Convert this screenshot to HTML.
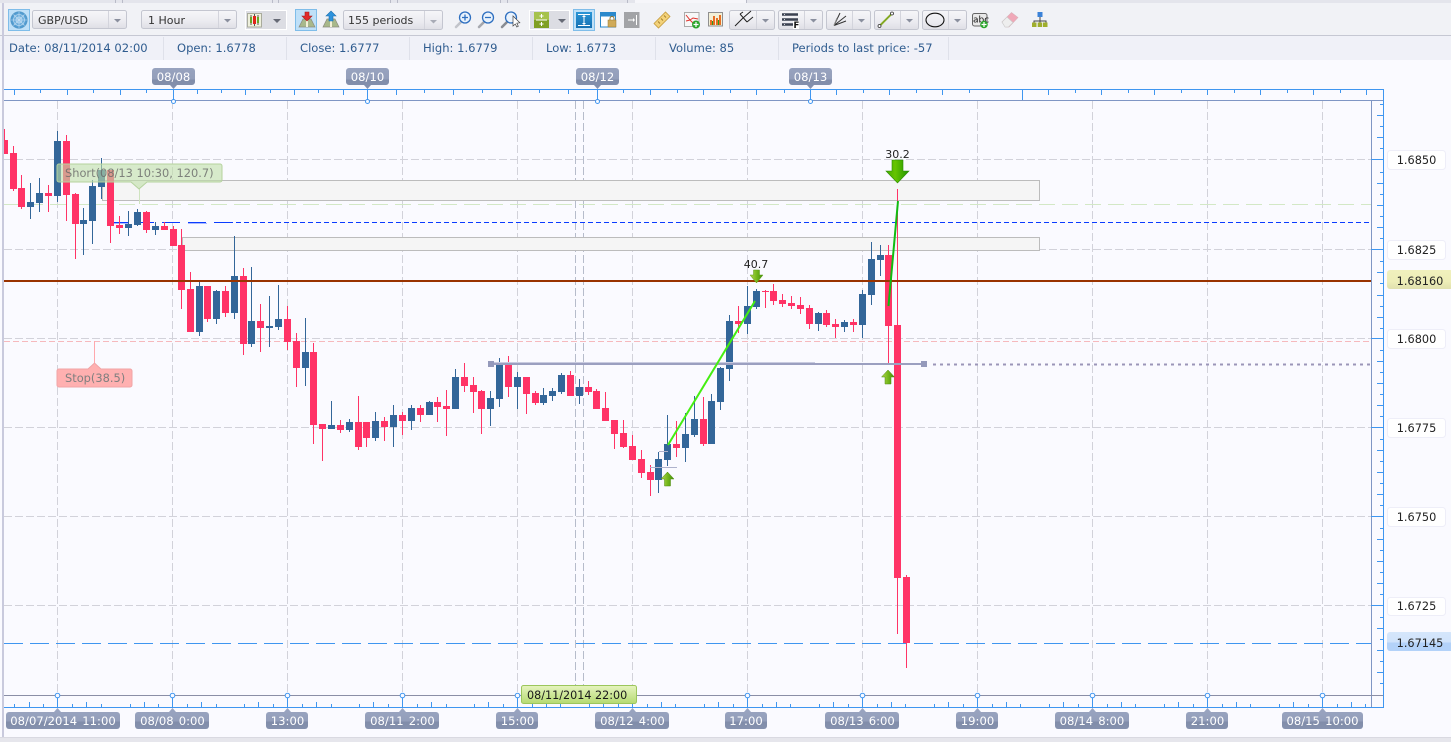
<!DOCTYPE html>
<html><head><meta charset="utf-8"><title>GBP/USD chart</title>
<style>
html,body{margin:0;padding:0;background:#fafaff;width:1451px;height:742px;overflow:hidden}
svg{position:absolute;left:0;top:0;display:block}
text{font-family:"DejaVu Sans","Liberation Sans",sans-serif;font-size:11px}
.i{fill:#2f5c8f;font-size:11.55px}
.l{fill:#fff;font-size:11.6px;text-anchor:middle;word-spacing:1.5px}
.p{fill:#222;font-size:11.3px;text-anchor:middle}
.d{fill:#333;font-size:11.3px}
.c{shape-rendering:crispEdges}
</style></head><body>
<svg width="1451" height="742" viewBox="0 0 1451 742" xmlns="http://www.w3.org/2000/svg">
<defs>
<linearGradient id="lb" x1="0" y1="0" x2="0" y2="1"><stop offset="0" stop-color="#98a3bf"/><stop offset=".55" stop-color="#939eba"/><stop offset=".56" stop-color="#808ca9"/><stop offset="1" stop-color="#8591ae"/></linearGradient>
<linearGradient id="dd" x1="0" y1="0" x2="0" y2="1"><stop offset="0" stop-color="#f6f6f9"/><stop offset=".6" stop-color="#ebebf0"/><stop offset="1" stop-color="#dedee5"/></linearGradient>
<linearGradient id="gl" x1="0" y1="0" x2="0" y2="1"><stop offset="0" stop-color="#e6f4bf"/><stop offset="1" stop-color="#b5da72"/></linearGradient>
<linearGradient id="ye" x1="0" y1="0" x2="0" y2="1"><stop offset="0" stop-color="#f0f0bd"/><stop offset=".6" stop-color="#eeeeb8"/><stop offset="1" stop-color="#e0e0ae"/></linearGradient>
<linearGradient id="bl" x1="0" y1="0" x2="0" y2="1"><stop offset="0" stop-color="#d5e6fb"/><stop offset=".55" stop-color="#d0e3fb"/><stop offset=".56" stop-color="#b3d2f9"/><stop offset="1" stop-color="#b3d2f9"/></linearGradient>
<linearGradient id="ar" x1="0" y1="0" x2="1" y2="0"><stop offset="0" stop-color="#b4d850"/><stop offset=".5" stop-color="#76b81c"/><stop offset="1" stop-color="#3f8f08"/></linearGradient>
<linearGradient id="ad" x1="0" y1="0" x2="1" y2="0"><stop offset="0" stop-color="#44aa00"/><stop offset=".4" stop-color="#66c400"/><stop offset="1" stop-color="#1e9400"/></linearGradient>
<radialGradient id="gb"><stop offset="0" stop-color="#9ccbee"/><stop offset="1" stop-color="#4594cc"/></radialGradient>
<linearGradient id="bb" x1="0" y1="0" x2="0" y2="1"><stop offset="0" stop-color="#2b95d6"/><stop offset="1" stop-color="#1670b2"/></linearGradient>
<linearGradient id="hd" x1="0" y1="0" x2="1" y2="0"><stop offset="0" stop-color="#c4c6cc"/><stop offset="1" stop-color="#85888f"/></linearGradient>
</defs>

<!-- backgrounds -->
<rect width="1451" height="742" fill="#fafaff"/>
<rect width="1451" height="36" fill="#f1f2f6"/>
<rect y="0" width="1451" height="3" fill="#e4e5ec"/>
<path class="c" d="M115.5 0V3M122.5 0V3M272.5 0V3M278.5 0V3M390.5 0V3M397.5 0V3M500.5 0V3M507.5 0V3M627.5 0V3M635.5 0V3M746.5 0V3" stroke="#b9bbc8"/>
<rect x="635" y="0" width="111" height="3" fill="#f6f6fa"/>
<rect y="35" width="1451" height="1" fill="#c6c8d3"/>
<rect y="36" width="1451" height="24" fill="#f0f1f8"/>
<path class="c" d="M163.5 37V60M286.5 37V60M409.5 37V60M532.5 37V60M655.5 37V60M778.5 37V60M948.5 37V60" stroke="#dfe1ea"/>
<rect x="2" y="3" width="2" height="735" fill="#c9cadd"/>
<rect y="737" width="1451" height="1" fill="#d9d9e1"/>
<rect y="738" width="1451" height="4" fill="#e6e6ec"/>

<!-- toolbar -->
<rect x="8.5" y="9.5" width="21" height="21" fill="#bfe0f8" stroke="#7fbde9"/>
<circle cx="19" cy="20" r="8.3" fill="url(#gb)" stroke="#5d9cc9" stroke-width=".6"/>
<g fill="none" stroke="#c3def3" stroke-width=".6"><circle cx="19" cy="20" r="5.5"/><circle cx="19" cy="20" r="3"/><path d="M11 20H27M19 12V28M13.5 14.500L24.500 25.500M24.500 14.500L13.500 25.500"/></g>

<rect x="32.5" y="10.5" width="94" height="18" rx="2" fill="url(#dd)" stroke="#c4c6d0"/>
<path class="c" d="M108.5 11V28" stroke="#d3d4dc"/>
<path d="M114 19h7l-3.500 3.500z" fill="#8a8f9e"/>
<text x="38" y="24" fill="#333">GBP/USD</text>

<rect x="141.5" y="10.5" width="95" height="18" rx="2" fill="url(#dd)" stroke="#c4c6d0"/>
<path class="c" d="M218.5 11V28" stroke="#d3d4dc"/>
<path d="M224 19h7l-3.500 3.500z" fill="#8a8f9e"/>
<text x="148" y="24" fill="#333">1 Hour</text>

<rect x="245.5" y="10.5" width="41" height="19" fill="#dcdde3" stroke="#fff"/>
<rect x="247.5" y="13.5" width="14" height="13.500" fill="#eef0dc" stroke="#a9ab9c"/>
<path d="M251 15V25M254.500 14V26M258 15V25" stroke="#333" stroke-width=".8"/>
<rect x="250" y="17" width="2" height="6" fill="#6aa52a"/><rect x="253" y="16" width="3" height="8" fill="#e2231a"/><rect x="257" y="17" width="2" height="6" fill="#6aa52a"/>
<path d="M273 19h8l-4 4z" fill="#666a75"/>

<rect x="295.5" y="9.5" width="21" height="21" fill="#bfe0f8" stroke="#7fbde9"/>
<path d="M299 27l4-8h8l4 8z" fill="#a8b88a" stroke="#8b8b80" stroke-width=".7"/><path d="M307 19v8" stroke="#f4f0d8" stroke-width="2"/>
<path d="M305 12h4v4h3l-5 5-5-5h3z" fill="#e12a2a" stroke="#a81b1b" stroke-width=".6"/>
<path d="M323 27l4-8h8l4 8z" fill="#a8b88a" stroke="#8b8b80" stroke-width=".7"/><path d="M331 19v8" stroke="#f4f0d8" stroke-width="2"/>
<path d="M331 11l5 5h-3v5h-4v-5h-3z" fill="#2e93dd" stroke="#1d6fae" stroke-width=".6"/>

<rect x="343.5" y="10.5" width="99" height="19" rx="2" fill="url(#dd)" stroke="#c4c6d0"/>
<path class="c" d="M424.5 11V29" stroke="#d3d4dc"/>
<path d="M430 20h7l-3.500 3.500z" fill="#a8abb6"/>
<text x="348" y="24" fill="#333">155 periods</text>

<!-- magnifiers -->
<path d="M461 22l-5 5M484 22l-5 5M507 22l-5 5" stroke="url(#hd)" stroke-width="2.600" stroke-linecap="round"/>
<g fill="#e9f2fc" stroke="#2e6fc0" stroke-width="1.300">
<circle cx="465" cy="17.500" r="5.500"/><circle cx="488" cy="17.500" r="5.500"/><circle cx="511" cy="17.500" r="5.500"/>
</g>
<path d="M462 17.500h6M465 14.500v6M485 17.500h6" stroke="#2e6fc0" stroke-width="1.300"/>
<path d="M513 16l0 10 2.300-2 1.500 3 1.500-.8-1.500-3 3-.4z" fill="#fff" stroke="#444" stroke-width=".7"/>

<!-- fit / panels -->
<rect x="529.5" y="10.5" width="40" height="19" fill="#dcdde3" stroke="#fff"/>
<rect x="534" y="12" width="15" height="8" fill="#a6c24c"/><rect x="534" y="20" width="15" height="8" fill="#7f9f22"/>
<path class="c" d="M536 20h11" stroke="#fff"/><path d="M541.500 14v4M539.500 16h4M541.500 22v4M539.500 24h4" stroke="#fff"/>
<path d="M558 19h8l-4 4z" fill="#666a75"/>

<rect x="573.5" y="9.5" width="21" height="21" fill="#bfe0f8" stroke="#7fbde9"/>
<rect x="576" y="12" width="16" height="16" fill="url(#bb)"/>
<path d="M578 14.500h12M578 25.500h12M584 16v8" stroke="#fff"/><path d="M582 17l2-2 2 2zM582 23l2 2 2-2z" fill="#fff"/>

<rect x="600.5" y="12.500" width="15" height="14.500" fill="#fff" stroke="#2b89cc"/><rect x="600" y="12" width="16" height="4.500" fill="#2b89cc"/>
<path d="M610 20v-1.500a2 2 0 0 1 4 0V20" fill="none" stroke="#94762f"/><rect x="608" y="20" width="8" height="7" fill="#d0aa58" stroke="#94762f" stroke-width=".5"/>
<rect x="624" y="12" width="15.500" height="16" fill="#a2a3a6"/><path d="M628 20h6M636.500 15v10" stroke="#fff"/><path d="M633 18l2 2-2 2z" fill="#fff"/>

<!-- ruler -->
<path d="M654 23.500l11.500-11.500 4.500 4.500-11.500 11.500z" fill="#f3d27a" stroke="#c59b3c" stroke-width=".8"/><path d="M658 21.500l2 2M661 18.500l2 2M664 15.500l2 2" stroke="#a7812e"/>

<!-- indicator icons -->
<rect x="684.5" y="12.5" width="14.500" height="14" fill="#f8f8f8" stroke="#aaa"/>
<path d="M686 15l4 5 3-2 5 1M686 21l4-1 4 4" stroke="#e0302a" fill="none"/><circle cx="696" cy="24.500" r="4" fill="#2ca52c"/><path d="M693.500 24.500h5M696 22v5" stroke="#fff" stroke-width="1.200"/>
<rect x="708.5" y="12.5" width="14" height="13.500" fill="#f3efd6" stroke="#8f8f8f"/>
<path d="M711 25v-5M714 25v-9M717 25v-7M720 25v-10" stroke="#e76f23" stroke-width="2"/><path d="M712.500 25v-4M718.500 25v-5" stroke="#2c9c1c"/>

<!-- split dropdowns -->
<g fill="url(#dd)" stroke="#c4c6d0">
<rect x="729.5" y="10.5" width="45" height="19" rx="2"/><rect x="778.5" y="10.5" width="44" height="19" rx="2"/><rect x="826.5" y="10.5" width="44" height="19" rx="2"/><rect x="874.5" y="10.5" width="44" height="19" rx="2"/><rect x="922.5" y="10.5" width="44" height="19" rx="2"/>
</g>
<path class="c" d="M756.5 11V29M804.5 11V29M852.5 11V29M900.5 11V29M948.5 11V29" stroke="#d3d4dc"/>
<path d="M762 19h7l-3.500 3.500zM810 19h7l-3.500 3.500zM858 19h7l-3.500 3.500zM906 19h7l-3.500 3.500zM954 19h7l-3.500 3.500z" fill="#8a8f9e"/>
<path d="M735 26L743 18M740 14L747 22M740 14L743 12M743 18L751 11M747 22L753 17" stroke="#222" fill="none"/>
<path d="M782 14.500h16M782 19.500h16M782 24.500h11" stroke="#3a4150" stroke-width="2.400"/><path d="M784 14.500h1M784 19.500h1M784 24.500h1" stroke="#cfd2da" stroke-width="1"/><rect x="793" y="21" width="6" height="8" fill="#fff"/><text x="793.500" y="28" style="font-size:8.500px;font-weight:bold" fill="#111">F</text>
<path d="M834 25.500L840 13M834 25.500L846 16M834 25.500L846 21" stroke="#333" fill="none"/><path d="M834 25.500L837 18" stroke="#888"/>
<path d="M879.500 26L892 13.500" stroke="#8fb52a" stroke-width="2"/><path d="M879.500 26L892 13.500" stroke="#5f7f14" stroke-width=".5"/><circle cx="879.500" cy="26" r="1.500" fill="#fff" stroke="#333" stroke-width=".8"/><circle cx="892" cy="13.500" r="1.500" fill="#fff" stroke="#333" stroke-width=".8"/>
<ellipse cx="935" cy="20" rx="9" ry="6.800" fill="none" stroke="#111" stroke-width="1.100"/>
<rect x="972.5" y="13.5" width="14.500" height="12.500" rx="2" fill="#e9e9e9" stroke="#666"/><text x="973" y="22.500" style="font-size:9px" fill="#111">abc</text><circle cx="984" cy="24.500" r="3.800" fill="#2ca52c"/><path d="M981.500 24.500h5M984 22v5" stroke="#fff" stroke-width="1.200"/>
<!-- eraser -->
<path d="M1002 22l9.500-9.500 6.500 5-9 9.500h-3.500z" fill="#f0a8b8" stroke="#d8b0b8" stroke-width=".6"/><path d="M1002 22l5-5 6 5.500-4.500 4.500h-3.500z" fill="#eeeeee" stroke="#c8c8c8" stroke-width=".6"/>
<!-- tree -->
<rect x="1037.500" y="12" width="5" height="5" fill="#3b82d8"/><path d="M1040 17v4M1034 23v-2h12v2M1040 21v2" stroke="#444" fill="none"/>
<rect x="1032" y="22.500" width="4.500" height="4.500" fill="#9fae2c"/><rect x="1037.700" y="22.500" width="4.500" height="4.500" fill="#9fae2c"/><rect x="1043" y="22.500" width="4.500" height="4.500" fill="#9fae2c"/>

<!-- info row -->
<text class="i" x="9" y="52">Date: 08/11/2014 02:00</text>
<text class="i" x="177" y="52">Open: 1.6778</text>
<text class="i" x="300" y="52">Close: 1.6777</text>
<text class="i" x="423" y="52">High: 1.6779</text>
<text class="i" x="546" y="52">Low: 1.6773</text>
<text class="i" x="669" y="52">Volume: 85</text>
<text class="i" x="792" y="52">Periods to last price: -57</text>

<!-- grid -->
<g class="c" stroke="#d2d2da" stroke-dasharray="8 3" fill="none">
<path d="M4 159.500H1371M4 249.500H1371M4 338.500H1371M4 427.500H1371M4 516.500H1371M4 605.500H1371"/>
<path d="M57.500 101V695M172.500 101V695M287.500 101V695M402.500 101V695M517.500 101V695M632.500 101V695M747.500 101V695M862.500 101V695M977.500 101V695M1092.500 101V695M1207.500 101V695M1322.500 101V695"/>
</g>
<path class="c" d="M575.500 101V695M583.500 101V695" stroke="#b6bccb" stroke-dasharray="8 3"/>

<!-- zones -->
<path class="c" d="M102.500 181V200.500H1039.500V180.500H102.500" fill="#f5f5f5" stroke="#bcbcbc"/>
<rect class="c" x="182.500" y="237.500" width="857" height="13" fill="#f5f5f5" stroke="#bcbcbc"/>

<!-- horizontal levels -->
<path class="c" d="M4 204.500H1371" stroke="#d3e8c6" stroke-dasharray="16 7"/>
<path class="c" d="M4 341.500H1371" stroke="#f6b9bd" stroke-dasharray="6 3"/>
<path class="c" d="M110 223.500H128M188 223.500H207" stroke="#aab8ff"/>
<path class="c" d="M110 222.500H228" stroke="#0a3cff" stroke-dasharray="18 8"/>
<path class="c" d="M228 222.500H1371" stroke="#0a3cff" stroke-dasharray="5 3"/>
<path class="c" d="M4 643.500H1371" stroke="#3f96f0" stroke-dasharray="19 7"/>

<!-- candles -->
<path class="c" fill="none" stroke="#ff3366" d="M4.500 129V154M13.500 146V191M21.500 175V209M48.500 185V212M66.500 135V221M75.500 193V259M110.500 170V243M119.500 216V234M146.500 211V233M164.500 222V230M173.500 226V246M181.500 229V309M190.500 272V332M207.500 286V322M225.500 286V317M243.500 268V355M260.500 304V352M287.500 306V350M296.500 333V387M313.500 343V444M322.500 424V461M340.500 420V433M358.500 396V450M366.500 422V447M384.500 417V441M402.500 412V435M420.500 405V422M437.500 397V422M446.500 390V436M464.500 363V392M473.500 377V413M481.500 390V434M508.500 356V397M526.500 377V414M535.500 391V405M570.500 371V396M588.500 381V395M596.500 389V409M605.500 392V421M614.500 420V449M623.500 420V448M632.500 435V460M641.500 450V478M650.500 465V496M676.500 421V457M703.500 397V446M738.500 306V333M765.500 290V308M773.500 284V305M782.500 294V307M791.500 296V309M800.500 297V314M809.500 305V329M826.500 310V327M835.500 319V338M853.500 319V332M888.500 245V363M897.500 189V634M906.500 575V668"/>
<path class="c" d="M6 140V154" stroke="#ff3366" stroke-width="4"/>
<path class="c" fill="none" stroke="#ff3366" stroke-width="7" d="M13.500 153V189M21.500 188V207M48.500 193V196M66.500 141V195M75.500 194V224M110.500 170V226M119.500 225V228M146.500 212V230M164.500 226V230M173.500 229V246M181.500 245V290M190.500 289V332M207.500 286V319M225.500 291V313M243.500 276V344M260.500 321V328M287.500 319V342M296.500 341V368M313.500 352V425M322.500 424V429M340.500 425V430M358.500 422V447M366.500 422V438M384.500 421V427M402.500 415V421M420.500 408V415M437.500 402V407M446.500 406V409M464.500 377V386M473.500 385V392M481.500 391V409M508.500 363V387M526.500 377V394M535.500 393V403M570.500 375V396M588.500 387V392M596.500 391V409M605.500 408V421M614.500 420V434M623.500 433V447M632.500 446V460M641.500 459V473M650.500 472V480M676.500 444V448M703.500 419V444M738.500 321V324M765.500 291V292M773.500 291V301M782.500 300V304M791.500 303V306M800.500 305V309M809.500 308V324M826.500 313V325M835.500 324V327M853.500 322V325M888.500 255V326M897.500 325V578M906.500 577V643"/>
<path class="c" fill="none" stroke="#336699" d="M30.500 183V219M39.500 178V212M57.500 131V202M83.500 208V255M92.500 180V244M101.500 158V199M128.500 211V236M137.500 209V226M155.500 222V235M199.500 282V336M216.500 290V324M234.500 236V319M251.500 267V347M269.500 296V347M278.500 285V330M305.500 318V386M331.500 401V429M349.500 419V432M375.500 412V441M393.500 405V447M411.500 405V430M429.500 401V415M455.500 369V409M490.500 391V426M499.500 358V407M517.500 372V409M543.500 388V405M552.500 388V401M561.500 373V394M579.500 379V404M658.500 452V493M667.500 415V466M685.500 413V462M694.500 396V437M711.500 394V444M720.500 367V410M729.500 315V381M747.500 286V334M756.500 289V309M818.500 312V331M844.500 320V332M862.500 290V338M871.500 242V305M880.500 245V276"/>
<path class="c" fill="none" stroke="#336699" stroke-width="7" d="M30.500 202V207M39.500 193V203M57.500 141V196M83.500 220V224M92.500 186V221M101.500 170V187M128.500 224V228M137.500 212V225M155.500 226V230M199.500 286V332M216.500 291V319M234.500 276V313M251.500 321V344M269.500 326V328M278.500 319V327M305.500 352V368M331.500 425V429M349.500 422V430M375.500 421V438M393.500 415V427M411.500 408V421M429.500 402V415M455.500 377V409M490.500 398V409M499.500 363V399M517.500 377V387M543.500 395V403M552.500 391V396M561.500 375V392M579.500 387V396M658.500 459V480M667.500 444V460M685.500 434V448M694.500 419V435M711.500 401V444M720.500 368V402M729.500 321V369M747.500 306V324M756.500 291V307M818.500 313V324M844.500 322V327M862.500 294V325M871.500 259V295M880.500 255V260"/>

<!-- brown line -->
<rect x="4" y="280" width="1367" height="2" fill="#993300"/>

<!-- lilac line -->
<path class="c" d="M491 362.500H815" stroke="#c9cbe0"/>
<path class="c" d="M491 364H924" stroke="#9b9fc0" stroke-width="2"/>
<rect x="488" y="361" width="6" height="6" fill="#9499bb"/><rect x="921" y="361" width="6" height="6" fill="#9499bb"/>
<path class="c" d="M933 364.500H1371" stroke="#9b95b8" stroke-width="2" stroke-dasharray="3 4"/>
<path class="c" d="M650 467.500H677M659 451.500H668" stroke="#aeb2cc"/>

<!-- trend lines -->
<path d="M668 445L755 301" stroke="#44ee11" stroke-width="2" fill="none"/>
<path d="M888.500 306L898 201" stroke="#11bb11" stroke-width="2" fill="none"/>

<!-- arrows -->
<path d="M892 160h11v11h6l-11.500 12-11.500-12h6z" fill="url(#ad)" stroke="#2a8a06" stroke-width=".6"/>
<path d="M753.500 270h6v5h3.500l-6.500 8-6.500-8h3.500z" fill="url(#ar)" stroke="#5e9a18" stroke-width=".5"/>
<path d="M667.500 472l6.500 7h-3.500v7h-6v-7h-3.500z" fill="url(#ar)" stroke="#4f8a10" stroke-width=".5"/>
<path d="M888 370l6.500 7h-3.500v7h-6v-7h-3.500z" fill="url(#ar)" stroke="#4f8a10" stroke-width=".5"/>
<text x="897.5" y="158" style="font-size:11px;text-anchor:middle" fill="#222">30.2</text>
<text x="756" y="268" style="font-size:11px;text-anchor:middle" fill="#222">40.7</text>

<!-- short / stop labels -->
<path d="M139.5 188V204" stroke="#cfe3bf"/>
<path d="M57 166a2 2 0 0 1 2-2H220a2 2 0 0 1 2 2V180a2 2 0 0 1-2 2H147l-8 7-8-7H59a2 2 0 0 1-2-2z" fill="#bfe0a8" fill-opacity=".6" stroke="#b5d29e"/>
<text x="65" y="177" style="font-size:11.4px" fill="#666" fill-opacity=".8">Short(08/13 10:30, 120.7)</text>
<path d="M94.5 341V363" stroke="#ffa8ad"/>
<path d="M57 371a2 2 0 0 1 2-2H88l6.500-6 6.500 6H130a2 2 0 0 1 2 2V385a2 2 0 0 1-2 2H59a2 2 0 0 1-2-2z" fill="#ffb0b0" stroke="#f0a4a6"/>
<text x="65" y="382" style="font-size:11.4px" fill="#7f7f7f">Stop(38.5)</text>

<!-- top axis -->
<path class="c" d="M4 89.500H1383" stroke="#3f96f0"/>
<path class="c" d="M4 100.500H1383" stroke="#7f96c4"/>
<path class="c" stroke="#3f96f0" d="M14.500 90V95M67.500 90V95M120.500 90V95M197.500 90V94M245.500 90V95M294.500 90V95M343.500 90V95M396.500 90V95M453.500 90V95M511.500 90V95M568.500 90V94M650.500 90V95M703.500 90V95M756.500 90V95M836.500 90V95M889.500 90V95M942.500 90V95M1048.500 90V95M1101.500 90V95M1154.500 90V95M1207.500 90V95M1260.500 90V95M1313.500 90V95M1366.500 90V95"/>
<path class="c" stroke="#3f96f0" d="M40.500 90V93M93.500 90V93M146.500 90V93M221.500 90V93M270.500 90V93M318.500 90V93M424.500 90V93M482.500 90V93M539.500 90V93M623.500 90V93M677.500 90V93M730.500 90V93M784.500 90V93M863.500 90V93M916.500 90V93M969.500 90V93M1075.500 90V93M1128.500 90V93M1181.500 90V93M1234.500 90V93M1287.500 90V93M1340.500 90V93"/>
<path class="c" stroke="#3f96f0" d="M173.500 90V100M367.500 90V100M597.500 90V100M810.500 90V100M1022.500 90V100"/>
<g fill="#fafaff" stroke="#3f96f0"><circle cx="173.5" cy="101.5" r="2"/><circle cx="367.5" cy="101.5" r="2"/><circle cx="597.5" cy="101.5" r="2"/><circle cx="810.5" cy="101.5" r="2"/></g>

<g fill="url(#lb)">
<path d="M155 68H192a3 3 0 0 1 3 3V82a3 3 0 0 1-3 3H177l-3.500 4-3.500-4H155a3 3 0 0 1-3-3V71a3 3 0 0 1 3-3z"/>
<path d="M349 68H386a3 3 0 0 1 3 3V82a3 3 0 0 1-3 3H371l-3.500 4-3.500-4H349a3 3 0 0 1-3-3V71a3 3 0 0 1 3-3z"/>
<path d="M579 68H616a3 3 0 0 1 3 3V82a3 3 0 0 1-3 3H601l-3.500 4-3.500-4H579a3 3 0 0 1-3-3V71a3 3 0 0 1 3-3z"/>
<path d="M792 68H829a3 3 0 0 1 3 3V82a3 3 0 0 1-3 3H814l-3.500 4-3.500-4H792a3 3 0 0 1-3-3V71a3 3 0 0 1 3-3z"/>
</g>
<text class="l" x="173.5" y="81">08/08</text>
<text class="l" x="367.5" y="81">08/10</text>
<text class="l" x="597.5" y="81">08/12</text>
<text class="l" x="810.5" y="81">08/13</text>

<!-- right axis -->
<path class="c" d="M1371.500 100V707" stroke="#7f96c4"/>
<path class="c" d="M1383.500 89V708" stroke="#3f96f0"/>
<path class="c" stroke="#3f96f0" d="M1371 159.500H1383M1371 249.500H1383M1371 338.500H1383M1371 427.500H1383M1371 516.500H1383M1371 605.500H1383"/>
<path class="c" stroke="#3f96f0" d="M1377 115.500H1383M1377 137.500H1383M1377 183.500H1383M1377 205.500H1383M1377 227.500H1383M1377 272.500H1383M1377 295.500H1383M1377 317.500H1383M1377 361.500H1383M1377 383.500H1383M1377 405.500H1383M1377 450.500H1383M1377 472.500H1383M1377 494.500H1383M1377 539.500H1383M1377 561.500H1383M1377 583.500H1383M1377 628.500H1383M1377 650.500H1383M1377 672.500H1383"/>
<path class="c" stroke="#3f96f0" d="M1380 104.500H1383M1380 126.500H1383M1380 148.500H1383M1380 172.500H1383M1380 194.500H1383M1380 216.500H1383M1380 238.500H1383M1380 261.500H1383M1380 283.500H1383M1380 306.500H1383M1380 328.500H1383M1380 350.500H1383M1380 372.500H1383M1380 394.500H1383M1380 416.500H1383M1380 439.500H1383M1380 461.500H1383M1380 483.500H1383M1380 505.500H1383M1380 528.500H1383M1380 550.500H1383M1380 572.500H1383M1380 594.500H1383M1380 617.500H1383M1380 639.500H1383M1380 661.500H1383M1380 683.500H1383"/>

<g fill="#fff" stroke="#eeeef8">
<rect x="1387.5" y="150.5" width="58" height="19" rx="3"/>
<rect x="1387.5" y="240.5" width="58" height="19" rx="3"/>
<rect x="1387.5" y="329.5" width="58" height="19" rx="3"/>
<rect x="1387.5" y="418.5" width="58" height="19" rx="3"/>
<rect x="1387.5" y="507.5" width="58" height="19" rx="3"/>
<rect x="1387.5" y="597.5" width="58" height="18" rx="3"/>
</g>
<rect x="1387" y="270" width="66" height="19" rx="3" fill="url(#ye)"/>
<rect x="1387" y="632" width="66" height="19" rx="3" fill="url(#bl)"/>
<text class="p" x="1416.5" y="164">1.6850</text>
<text class="p" x="1416.5" y="254">1.6825</text>
<text class="p" x="1420" y="285">1.68160</text>
<text class="p" x="1416.5" y="343">1.6800</text>
<text class="p" x="1416.5" y="432">1.6775</text>
<text class="p" x="1416.5" y="521">1.6750</text>
<text class="p" x="1416.5" y="610">1.6725</text>
<text class="p" x="1420" y="647">1.67145</text>

<!-- bottom axis -->
<path class="c" d="M4 695.500H1383" stroke="#8a8ea6"/>
<path class="c" d="M4 707.500H1384" stroke="#3f96f0"/>
<path class="c" stroke="#3f96f0" d="M29.500 702V707M86.500 702V707M144.500 702V707M201.500 702V707M258.500 702V707M316.500 702V707M373.500 702V707M431.500 702V707M488.500 702V707M546.500 702V707M603.500 702V707M661.500 702V707M718.500 702V707M776.500 702V707M833.500 702V707M891.500 702V707M948.500 702V707M1006.500 702V707M1063.500 702V707M1121.500 702V707M1178.500 702V707M1236.500 702V707M1293.500 702V707M1351.500 702V707"/>
<path class="c" stroke="#3f96f0" d="M14.500 704V707M43.500 704V707M72.500 704V707M101.500 704V707M130.500 704V707M158.500 704V707M187.500 704V707M216.500 704V707M244.500 704V707M273.500 704V707M302.500 704V707M331.500 704V707M359.500 704V707M388.500 704V707M417.500 704V707M446.500 704V707M474.500 704V707M503.500 704V707M532.500 704V707M560.500 704V707M589.500 704V707M618.500 704V707M647.500 704V707M675.500 704V707M704.500 704V707M733.500 704V707M762.500 704V707M790.500 704V707M819.500 704V707M848.500 704V707M877.500 704V707M905.500 704V707M934.500 704V707M963.500 704V707M992.500 704V707M1020.500 704V707M1049.500 704V707M1078.500 704V707M1107.500 704V707M1135.500 704V707M1164.500 704V707M1193.500 704V707M1222.500 704V707M1250.500 704V707M1279.500 704V707M1308.500 704V707M1337.500 704V707M1365.500 704V707"/>
<path class="c" stroke="#3f96f0" d="M57.500 696V707M172.500 696V707M287.500 696V707M402.500 696V707M517.500 696V707M632.500 696V707M747.500 696V707M862.500 696V707M977.500 696V707M1092.500 696V707M1207.500 696V707M1322.500 696V707"/>
<g fill="#fafaff" stroke="#3f96f0"><circle cx="57.5" cy="695.5" r="2.300"/><circle cx="172.5" cy="695.5" r="2.300"/><circle cx="287.5" cy="695.5" r="2.300"/><circle cx="402.5" cy="695.5" r="2.300"/><circle cx="517.5" cy="695.5" r="2.300"/><circle cx="632.5" cy="695.5" r="2.300"/><circle cx="747.5" cy="695.5" r="2.300"/><circle cx="862.5" cy="695.5" r="2.300"/><circle cx="977.5" cy="695.5" r="2.300"/><circle cx="1092.5" cy="695.5" r="2.300"/><circle cx="1207.5" cy="695.5" r="2.300"/><circle cx="1322.5" cy="695.5" r="2.300"/></g>

<g fill="url(#lb)">
<rect x="6" y="712" width="114" height="17" rx="3"/>
<rect x="135" y="712" width="74" height="17" rx="3"/>
<rect x="266" y="712" width="42" height="17" rx="3"/>
<rect x="365" y="712" width="74" height="17" rx="3"/>
<rect x="496" y="712" width="42" height="17" rx="3"/>
<rect x="595" y="712" width="74" height="17" rx="3"/>
<rect x="725" y="712" width="42" height="17" rx="3"/>
<rect x="825" y="712" width="74" height="17" rx="3"/>
<rect x="956" y="712" width="42" height="17" rx="3"/>
<rect x="1055" y="712" width="74" height="17" rx="3"/>
<rect x="1186" y="712" width="42" height="17" rx="3"/>
<rect x="1282" y="712" width="81" height="17" rx="3"/>
</g>
<path d="M54 712l3.500-4 3.500 4zM169 712l3.500-4 3.500 4zM284 712l3.500-4 3.500 4zM399 712l3.500-4 3.500 4zM514 712l3.500-4 3.500 4zM629 712l3.500-4 3.500 4zM744 712l3.500-4 3.500 4zM859 712l3.500-4 3.500 4zM974 712l3.500-4 3.500 4zM1089 712l3.500-4 3.500 4zM1204 712l3.500-4 3.500 4zM1319 712l3.500-4 3.500 4z" fill="#98a3bf"/>
<text class="l" x="63" y="725">08/07/2014 11:00</text>
<text class="l" x="172.5" y="725">08/08 0:00</text>
<text class="l" x="287.5" y="725">13:00</text>
<text class="l" x="402.5" y="725">08/11 2:00</text>
<text class="l" x="517.5" y="725">15:00</text>
<text class="l" x="632.5" y="725">08/12 4:00</text>
<text class="l" x="746" y="725">17:00</text>
<text class="l" x="862.5" y="725">08/13 6:00</text>
<text class="l" x="977.5" y="725">19:00</text>
<text class="l" x="1092" y="725">08/14 8:00</text>
<text class="l" x="1207.5" y="725">21:00</text>
<text class="l" x="1322.5" y="725">08/15 10:00</text>

<!-- crosshair date -->
<rect x="521.5" y="685.5" width="115" height="18" rx="2" fill="url(#gl)" stroke="#9cc65c"/>
<text x="527" y="699" style="fill:#1a1a1a;font-size:11.2px">08/11/2014 22:00</text>
</svg>
</body></html>
